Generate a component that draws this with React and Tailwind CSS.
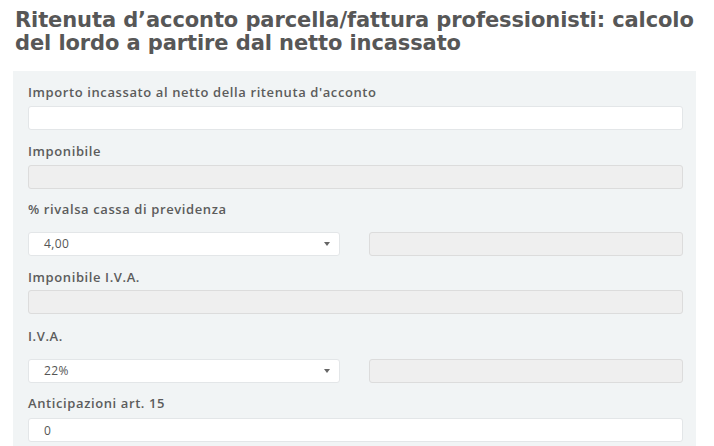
const labelCls = "block text-[13px] leading-4 font-semibold text-[#5c5c5c] tracking-[0.6px]";
const inputBase = "block w-full h-6 rounded-[3px] border px-[15px] text-[12px] text-[#555] outline-none";

function Field({ label, value = "", disabled = false, className = "" }) {
  return (
    <div className={className}>
      <label className={`${labelCls} mb-[6px]`}>{label}</label>
      <input
        readOnly
        value={value}
        disabled={disabled}
        className={`${inputBase} ${
          disabled ? "bg-[#efefef] border-[#dcdcdc]" : "bg-white border-[#e3e6e8]"
        }`}
      />
    </div>
  );
}

function SelectRow({ label, value, className = "" }) {
  return (
    <div className={className}>
      <label className={`${labelCls} mb-[15px]`}>{label}</label>
      <div className="flex items-center">
        <div className="relative w-[312px] h-6 rounded-[3px] border border-[#e3e6e8] bg-white flex items-center pl-[15px]">
          <span className="text-[12px] text-[#555] tracking-[0.4px]">{value}</span>
          <span className="absolute right-[9px] top-[9px] w-0 h-0 border-l-[3px] border-r-[3px] border-t-[4px] border-l-transparent border-r-transparent border-t-[#666]" />
        </div>
        <div className="ml-[29px] flex-1 h-6 rounded-[3px] border border-[#dcdcdc] bg-[#efefef]" />
      </div>
    </div>
  );
}

export default function App() {
  return (
    <div className="w-[714px] h-[446px] overflow-hidden bg-white" style={{ fontFamily: "'Open Sans', 'Liberation Sans', sans-serif" }}>
      <h1
        className="pt-[9px] pl-[15px] pr-1 text-[21px] leading-[23px] font-bold text-[#575757] tracking-[-0.1px]"
        style={{ fontFamily: "'DejaVu Sans', 'Liberation Sans', sans-serif" }}
      >
        Ritenuta d’acconto parcella/fattura professionisti: calcolo del lordo a partire dal netto incassato
      </h1>
      <div className="mt-[16px] ml-[13px] w-[683px] bg-[#f1f4f5] pt-[13px] pl-[15px] pr-[13px] pb-4">
        <Field label="Importo incassato al netto della ritenuta d'acconto" />
        <Field label="Imponibile" disabled className="mt-[13px]" />
        <SelectRow label="% rivalsa cassa di previdenza" value="4,00" className="mt-[12px]" />
        <div className="mt-[13px]">
          <label className={`${labelCls} mb-[5px]`}>Imponibile I.V.A.</label>
          <input readOnly disabled className={`${inputBase} bg-[#efefef] border-[#dcdcdc]`} />
        </div>
        <SelectRow label="I.V.A." value="22%" className="mt-[14px]" />
        <div className="mt-[12px]">
          <label className={`${labelCls} mb-[7px]`}>Anticipazioni art. 15</label>
          <input readOnly value="0" className={`${inputBase} bg-white border-[#e3e6e8] tracking-[0.4px]`} />
        </div>
      </div>
    </div>
  );
}
